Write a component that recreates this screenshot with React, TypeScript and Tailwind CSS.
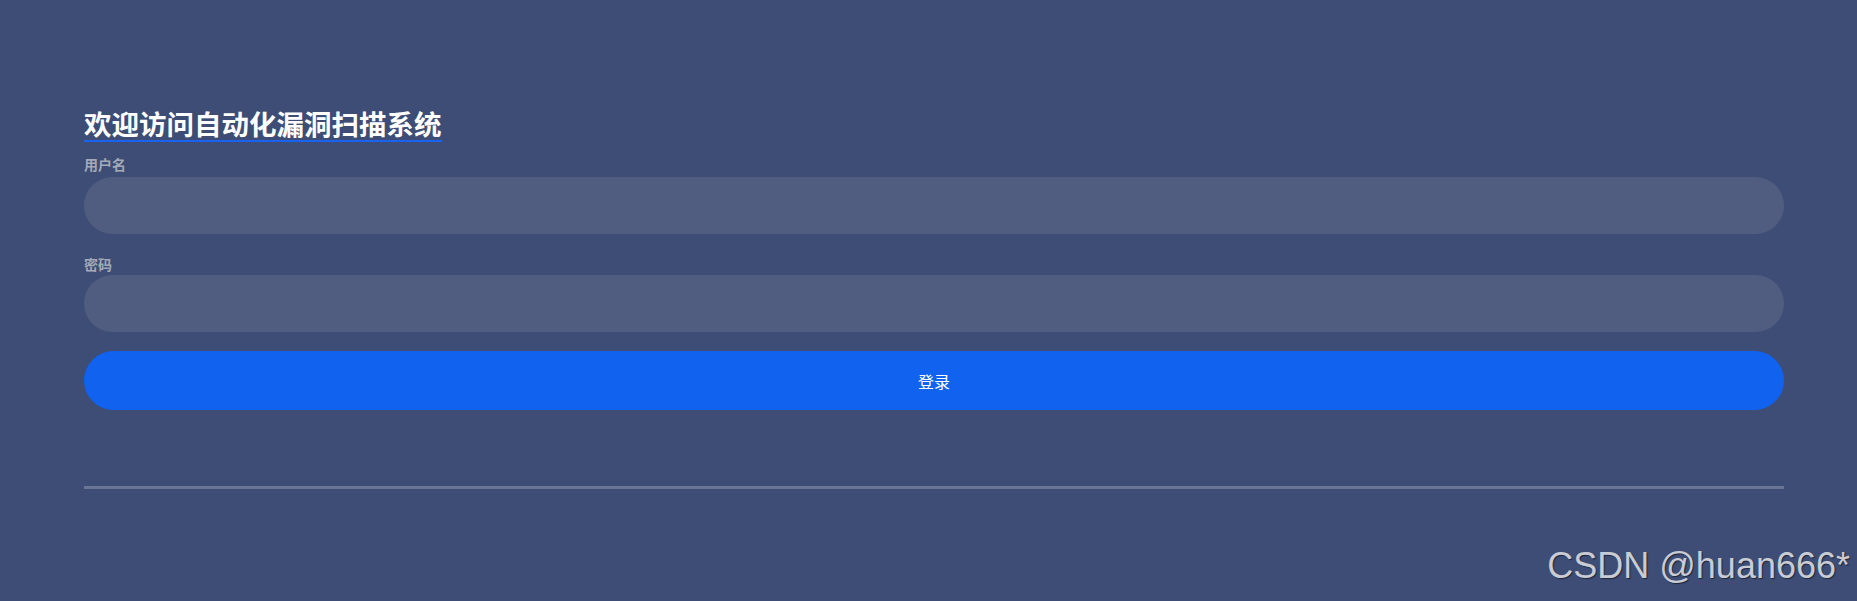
export default function App() {
  return (
    <div className="relative h-[601px] w-full overflow-hidden bg-[#3d4d75] font-['Noto_Sans_CJK_SC',sans-serif]">
      <div className="ml-[84px] w-[1700px] pt-[106px]">
        <h1 className="inline-block border-b-2 border-[#1a63f0] text-[27.5px] font-bold leading-[34px] text-white">
          欢迎访问自动化漏洞扫描系统
        </h1>
        <form className="flex flex-col" onSubmit={(e) => e.preventDefault()}>
          <label className="mt-[12px] text-[14px] font-bold leading-[20px] text-[#a4a9b8]">用户名</label>
          <input
            type="text"
            className="mt-[3px] h-[57px] w-full rounded-full bg-[#505d80] px-6 text-white outline-none"
          />
          <label className="mt-[20px] text-[14px] font-bold leading-[20px] text-[#a4a9b8]">密码</label>
          <input
            type="password"
            className="mt-[1px] h-[57px] w-full rounded-full bg-[#505d80] px-6 text-white outline-none"
          />
          <button
            type="submit"
            className="mt-[19px] h-[59px] w-full rounded-full bg-[#1162ee] text-[16px] text-white"
          >
            登录
          </button>
        </form>
        <div className="mt-[76px] h-[3px] w-full bg-[#6a7596]" />
      </div>
      <div className="absolute right-[7px] top-[544px] font-['Liberation_Sans',sans-serif] text-[36px] leading-[44px] text-[#c9ccd4] [text-shadow:1px_1px_1px_rgba(0,0,0,0.5)]">
        CSDN @huan666*
      </div>
    </div>
  );
}
